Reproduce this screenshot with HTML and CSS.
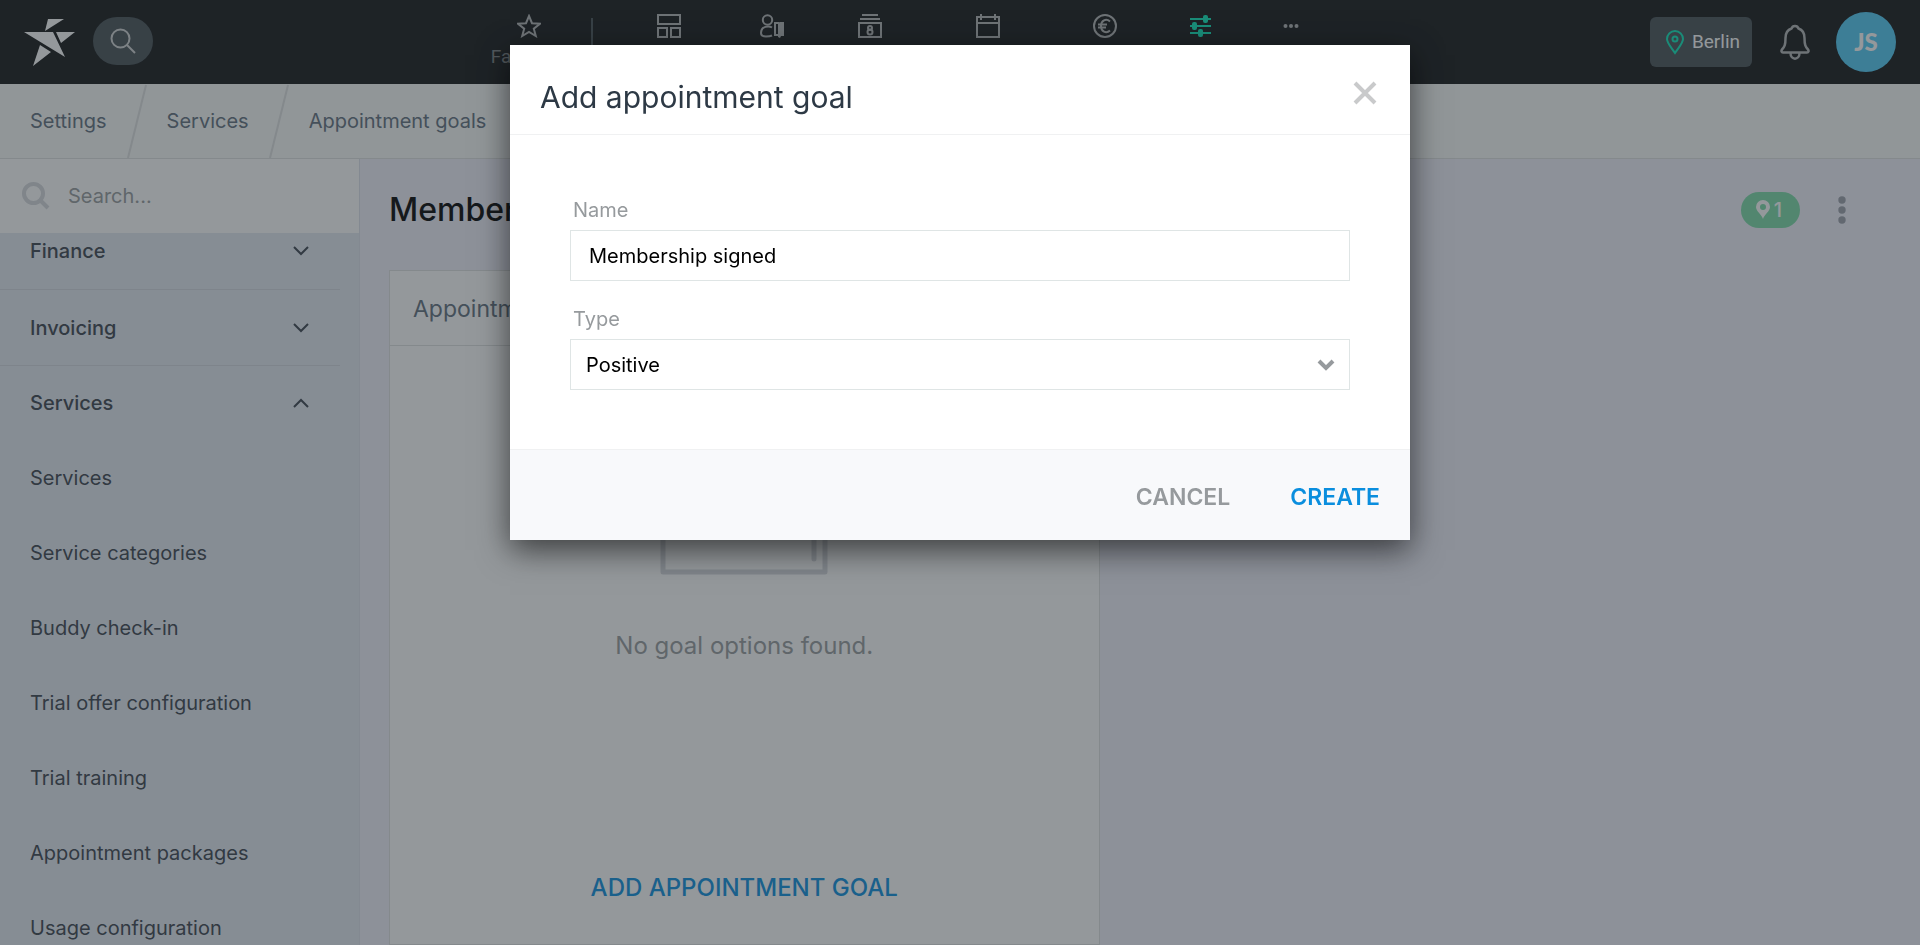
FILE: index.html
```html
<!DOCTYPE html>
<html lang="en">
<head>
    <meta charset="UTF-8">
    <meta name="viewport" content="width=device-width,initial-scale=1">
    <title>Appointment goals</title>
    <link rel="stylesheet" href="styles.css">
</head>
<body>
    <div class="page">
        <header class="topbar">
            <a href="#" class="logo" aria-label="Home">
                <svg width="51" height="48" viewBox="0 0 51 48" fill="currentColor"><path d="M24 1h16L21 13zM0 14h29l12 25zM32 14h19L37 25zM16 27l11 7L9 48z"/></svg>
            </a>
            <button type="button" class="search-btn" aria-label="Search">
                <svg width="26" height="26" viewBox="0 0 26 26" fill="none" stroke="currentColor" stroke-width="2"><circle cx="10.500" cy="10.500" r="9"/><path d="M17 17l8 8"/></svg>
            </button>
            <nav class="nav">
                <a href="#">
                    <svg width="24" height="24" viewBox="0 0 24 24"><path d="M12 2l3 7.200 8 .5-6.200 5 2 7.300L12 18l-6.800 4 2-7.300L1 9.700l8-.5z"/></svg>
                    <span>Favorites</span>
                </a>
                <i class="sep"></i>
                <a href="#" aria-label="Dashboard">
                    <svg width="24" height="24" viewBox="0 0 24 24"><path d="M1 1h22v9H1zM1 14h9v9H1zM14 14h9v9h-9z"/></svg>
                </a>
                <a href="#" aria-label="Check-in">
                    <svg width="24" height="24" viewBox="0 0 24 24"><circle cx="7.500" cy="6" r="4.700"/><path d="M12 13.500C9 11.500 1 12 1 19c0 2.500 2 3.500 5 3.500 2 0 4 0 6-1M18 21h-3V9h4"/><path class="solid" d="M18 10c0-1 1-2 2-2h4v14h-3l-1 2-2-1z"/></svg>
                </a>
                <a href="#" aria-label="Members">
                    <svg width="24" height="24" viewBox="0 0 24 24"><path d="M1 9h22v14H1zM2 5h20M4 1h16"/><circle cx="12" cy="14" r="2"/><circle cx="12" cy="18" r="2.500"/></svg>
                </a>
                <a href="#" aria-label="Calendar">
                    <svg width="24" height="24" viewBox="0 0 24 24"><path d="M1 3h22v20H1zM1 9h22M5 0v6M19 0v6"/></svg>
                </a>
                <a href="#" aria-label="Finance">
                    <svg width="24" height="24" viewBox="0 0 24 24"><circle cx="12" cy="12" r="11"/><path d="M17 7.500C13 4 8 6.500 8 12s5 8 9 4.500M5 10.500h9M5 13.500h8"/></svg>
                </a>
                <a href="#" class="active" aria-label="Settings">
                    <svg width="24" height="24" viewBox="0 0 24 24"><path d="M1 5h21M1 12h21M1 19h21"/><rect class="solid" x="14" y="1" width="5" height="8" rx="2"/><rect class="solid" x="3" y="8" width="5" height="8" rx="2"/><rect class="solid" x="9" y="15" width="5" height="8" rx="2"/></svg>
                </a>
                <a href="#" aria-label="More">
                    <svg width="24" height="24" viewBox="0 0 24 24"><g class="solid"><circle cx="6.500" cy="12" r="2"/><circle cx="12" cy="12" r="2"/><circle cx="17.500" cy="12" r="2"/></g></svg>
                </a>
            </nav>
            <button type="button" class="place">
                <svg width="18" height="25" viewBox="0 0 18 25" fill="none" stroke="currentColor" stroke-width="2"><path d="M9 23C5 17 1 13 1 9a8 8 0 0 1 16 0c0 4-4 8-8 14z"/><circle cx="9" cy="9" r="2.500"/></svg>
                <span>Berlin</span>
            </button>
            <button type="button" class="bell" aria-label="Notifications">
                <svg width="30" height="36" viewBox="0 0 30 36" fill="none" stroke="currentColor" stroke-width="2.500" stroke-linejoin="round"><path d="M15 2c-2 0-3 1-3.500 2.500C7 6 5.500 9.500 5.500 14c0 7-1 9-3.500 11.500-1 1.500-.5 3 1 3h24c1.500 0 2-1.500 1-3-2.500-2.500-3.500-4.500-3.500-11.500 0-4.500-1.500-8-6-9.500C18 3 17 2 15 2zM10.500 29c0 7.500 9 7.500 9 0"/></svg>
            </button>
            <a href="#" class="avatar">JS</a>
        </header>

        <nav class="crumbs">
            <a href="#">Settings</a>
            <svg width="20" height="74" viewBox="0 0 20 74"><path d="M19 1L1 74"/></svg>
            <a href="#">Services</a>
            <svg width="20" height="74" viewBox="0 0 20 74"><path d="M19 1L1 74"/></svg>
            <a href="#">Appointment goals</a>
        </nav>

        <div class="content">
            <aside class="sidebar">
                <label class="side-search">
                    <svg width="28" height="28" viewBox="0 0 28 28" fill="none" stroke="currentColor" stroke-width="4"><circle cx="11.500" cy="11.500" r="9.500"/><path d="M18 18l8 8"/></svg>
                    <input type="text" placeholder="Search..." aria-label="Search settings">
                </label>
                <div class="menu">
                    <button type="button" class="group">Finance
                        <svg width="16" height="10" viewBox="0 0 16 10"><path d="M1 1l7 7 7-7"/></svg>
                    </button>
                    <button type="button" class="group">Invoicing
                        <svg width="16" height="10" viewBox="0 0 16 10"><path d="M1 1l7 7 7-7"/></svg>
                    </button>
                    <button type="button" class="group open">Services
                        <svg width="16" height="10" viewBox="0 0 16 10"><path d="M1 9l7-7 7 7"/></svg>
                    </button>
                    <a href="#">Services</a>
                    <a href="#">Service categories</a>
                    <a href="#">Buddy check-in</a>
                    <a href="#">Trial offer configuration</a>
                    <a href="#">Trial training</a>
                    <a href="#">Appointment packages</a>
                    <a href="#">Usage configuration</a>
                </div>
            </aside>

            <main class="main">
                <div class="title-row">
                    <h1>Membership</h1>
                    <span class="badge">
                        <svg width="14" height="20" viewBox="0 0 14 20" fill="currentColor" fill-rule="evenodd"><path d="M7 19C5.500 14 0 11.500 0 7a7 7 0 0 1 14 0c0 4.500-5.500 7-7 12zM7 4a3 3 0 1 0 0 6 3 3 0 0 0 0-6z"/></svg>
                        1
                    </span>
                    <button type="button" class="more" aria-label="More actions">
                        <svg width="8" height="28" viewBox="0 0 8 28" fill="currentColor"><circle cx="4" cy="4" r="3.700"/><circle cx="4" cy="14" r="3.700"/><circle cx="4" cy="24" r="3.700"/></svg>
                    </button>
                </div>
                <div class="cards">
                    <section class="card">
                        <h2>Appointment goals</h2>
                        <div class="empty">
                            <svg width="168" height="168" viewBox="0 0 168 168" fill="none" stroke="currentColor" stroke-width="5" stroke-linejoin="round"><path d="M3 3h162v162H3z"/><path d="M154 20v132" stroke-linecap="round"/></svg>
                            <p>No goal options found.</p>
                        </div>
                        <button type="button" class="add">ADD APPOINTMENT GOAL</button>
                    </section>
                </div>
            </main>
        </div>
    </div>

    <div class="overlay">
        <form class="modal" role="dialog" aria-labelledby="modal-title">
            <div class="modal-head">
                <h2 id="modal-title">Add appointment goal</h2>
                <button type="button" class="close" aria-label="Close">
                    <svg width="24" height="24" viewBox="0 0 24 24" fill="none" stroke="currentColor" stroke-width="4"><path d="M2 2l20 20M22 2L2 22"/></svg>
                </button>
            </div>
            <div class="modal-body">
                <label for="name">Name</label>
                <input type="text" id="name" value="Membership signed">
                <label for="type">Type</label>
                <div class="select">
                    <select id="type">
                        <option>Positive</option>
                    </select>
                    <svg width="18" height="12" viewBox="0 0 18 12" fill="none" stroke="currentColor" stroke-width="4"><path d="M2 2l7 7 7-7"/></svg>
                </div>
            </div>
            <div class="modal-foot">
                <button type="button">CANCEL</button>
                <button type="submit" class="primary">CREATE</button>
            </div>
        </form>
    </div>
</body>
</html>
```

FILE: styles.css
```css
*{ box-sizing:border-box;}
html,body{ height:100%;}
body,h1,h2,p{ margin:0; padding:0;}
body{
    font:20px/28px Inter,"Liberation Sans",sans-serif;
    color:#3a424d;
    overflow:hidden;
}
a{ color:inherit; text-decoration:none;}
button,input,select{
    margin:0;
    padding:0;
    border:0;
    background:none;
    font:inherit;
    color:inherit;
    outline:none;
}
svg{ display:block; flex:none;}
.page{ height:100%; display:flex; flex-direction:column; background:#f0f0fb;}

/* top bar */
.topbar{
    flex:none;
    display:flex;
    align-items:center;
    height:84px;
    padding:0 24px;
    background:#121415;
    color:#b2b4b5;
    font-family:Roboto,sans-serif;
    font-size:19px;
}
.logo{ color:#fff;}
.search-btn{
    display:flex;
    align-items:center;
    justify-content:center;
    width:60px;
    height:48px;
    margin:0 0 2px 18px;
    border-radius:24px;
    background:#465055;
    color:#d0d2d3;
}
.nav{
    flex:1;
    align-self:stretch;
    display:grid;
    grid-template-columns:76px 50px 104px 102px 94px 142px 92px 100px 80px;
    justify-content:center;
    padding:14px 0 0 20px;
}
.nav a{
    display:flex;
    flex-direction:column;
    align-items:center;
    gap:5px;
}
.nav span{ color:#7a7e80;}
.nav svg{ fill:none; stroke:currentColor; stroke-width:2;}
.nav .solid{ fill:currentColor; stroke:none;}
.nav .active{ color:#0ae6b9;}
.nav .sep{
    width:2px;
    height:48px;
    margin:4px auto 0;
    background:#465055;
}
.place{
    display:flex;
    align-items:center;
    gap:8px;
    height:50px;
    padding:0 12px 0 16px;
    border-radius:6px;
    background:#465055;
    color:#0ae6b9;
}
.place span{ color:#fff;}
.bell{ margin:0 26px 0 28px;}
.avatar{
    display:flex;
    align-items:center;
    justify-content:center;
    width:60px;
    height:60px;
    border-radius:50%;
    background:#50caf5;
    color:#fff;
    font:900 24px/28px Lato,sans-serif;
}

/* breadcrumb */
.crumbs{
    flex:none;
    display:flex;
    align-items:center;
    gap:20px;
    height:75px;
    padding:0 30px;
    border-bottom:1px solid #dee0e0;
    background:#f8faf9;
    color:#606e7d;
}
.crumbs svg{ fill:none; stroke:#dee0e0; stroke-width:2;}

.content{ flex:1; display:flex; min-height:0;}

/* sidebar */
.sidebar{
    flex:none;
    display:flex;
    flex-direction:column;
    width:360px;
    background:#e2e8f1;
    border-right:1px solid #dde0ea;
}
.side-search{
    flex:none;
    display:flex;
    align-items:center;
    gap:18px;
    height:74px;
    padding:0 22px;
    background:#fff;
    color:#d6d8dd;
}
.side-search input{ flex:1; min-width:0; color:#3a424d;}
.side-search input::placeholder{ color:#969a9d; opacity:1;}
.menu{
    flex:1;
    display:flex;
    flex-direction:column;
    min-height:0;
    margin-right:19px;
    overflow:hidden;
}
.menu a,.group{
    flex:none;
    display:flex;
    align-items:center;
    justify-content:space-between;
    height:75px;
    padding:0 31px 0 30px;
}
.group{
    height:76px;
    border-bottom:1px solid #d2d6de;
    font-weight:500;
}
.group:first-child{ height:57px; padding-bottom:20px;}
.group.open{ height:74px; border-bottom:0;}
.group svg{ fill:none; stroke:currentColor; stroke-width:2;}

/* main */
.main{
    flex:1;
    display:flex;
    flex-direction:column;
    padding:0 30px 0 29px;
}
.title-row{
    display:flex;
    align-items:center;
    height:102px;
    padding-right:30px;
}
.title-row h1{ flex:1; font-size:32px; line-height:40px; font-weight:500; color:#000;}
.badge{
    display:flex;
    align-items:center;
    gap:4px;
    height:36px;
    padding:0 18px 0 15px;
    border-radius:18px;
    background:#7adaa7;
    color:#fff;
    font-weight:500;
}
.more{
    display:flex;
    justify-content:center;
    width:36px;
    margin-left:24px;
    color:#9a9ea9;
}
.cards{
    flex:1;
    display:grid;
    grid-template-columns:1fr 1fr;
    gap:80px;
    margin-top:9px;
}
.card{
    display:flex;
    flex-direction:column;
    border:1px solid #dee0e0;
    background:#fff;
}
.card h2{
    padding:24px 23px 22px;
    border-bottom:1px solid #dee0e0;
    font-size:23px;
    line-height:28px;
    font-weight:400;
    color:#606e7d;
}
.empty{
    flex:1;
    display:flex;
    flex-direction:column;
    align-items:center;
    padding-top:61px;
    gap:57px;
    color:#d6d8dd;
}
.empty p{ font-size:24px; color:#969a9d;}
.add{
    padding:28px;
    margin-bottom:14px;
    font-size:24px;
    font-weight:500;
    color:#0a8ede;
}

/* modal */
.overlay{
    position:fixed;
    inset:0;
    display:flex;
    align-items:flex-start;
    justify-content:center;
    padding-top:45px;
    background:rgba(42,50,55,.5);
}
.modal{
    width:100%;
    max-width:900px;
    background:#fff;
    box-shadow:0 10px 30px rgba(0,0,0,.6);
}
.modal-head{
    display:flex;
    align-items:center;
    justify-content:space-between;
    height:90px;
    padding:0 33px 0 30px;
    border-bottom:1px solid #f0f1f2;
}
.modal-head h2{ padding-top:14px; font-size:30px; line-height:40px; font-weight:400; color:#2d3945;}
.close{ padding-top:6px; color:#c9cacb;}
.modal-body{
    display:flex;
    flex-direction:column;
    padding:60px 60px 59px;
}
.modal-body label{ padding:1px 3px 6px; color:#969a9d;}
.modal-body input,.modal-body select{
    width:100%;
    height:51px;
    padding:0 18px;
    border:1px solid #dfe5e5;
    background:#fff;
    color:#000;
}
.modal-body input{ margin-bottom:23px;}
.modal-body select{ appearance:none; padding:0 15px;}
.select{ position:relative;}
.select svg{
    position:absolute;
    right:15px;
    top:20px;
    color:#969a9d;
    pointer-events:none;
}
.modal-foot{
    display:flex;
    align-items:center;
    justify-content:flex-end;
    gap:60px;
    height:91px;
    padding:3px 30px 0;
    border-top:1px solid #f0f1f2;
    background:#f8f9fb;
    font-size:23px;
    font-weight:600;
    color:#969a9d;
}
.modal-foot .primary{ color:#0a8ede;}
```
